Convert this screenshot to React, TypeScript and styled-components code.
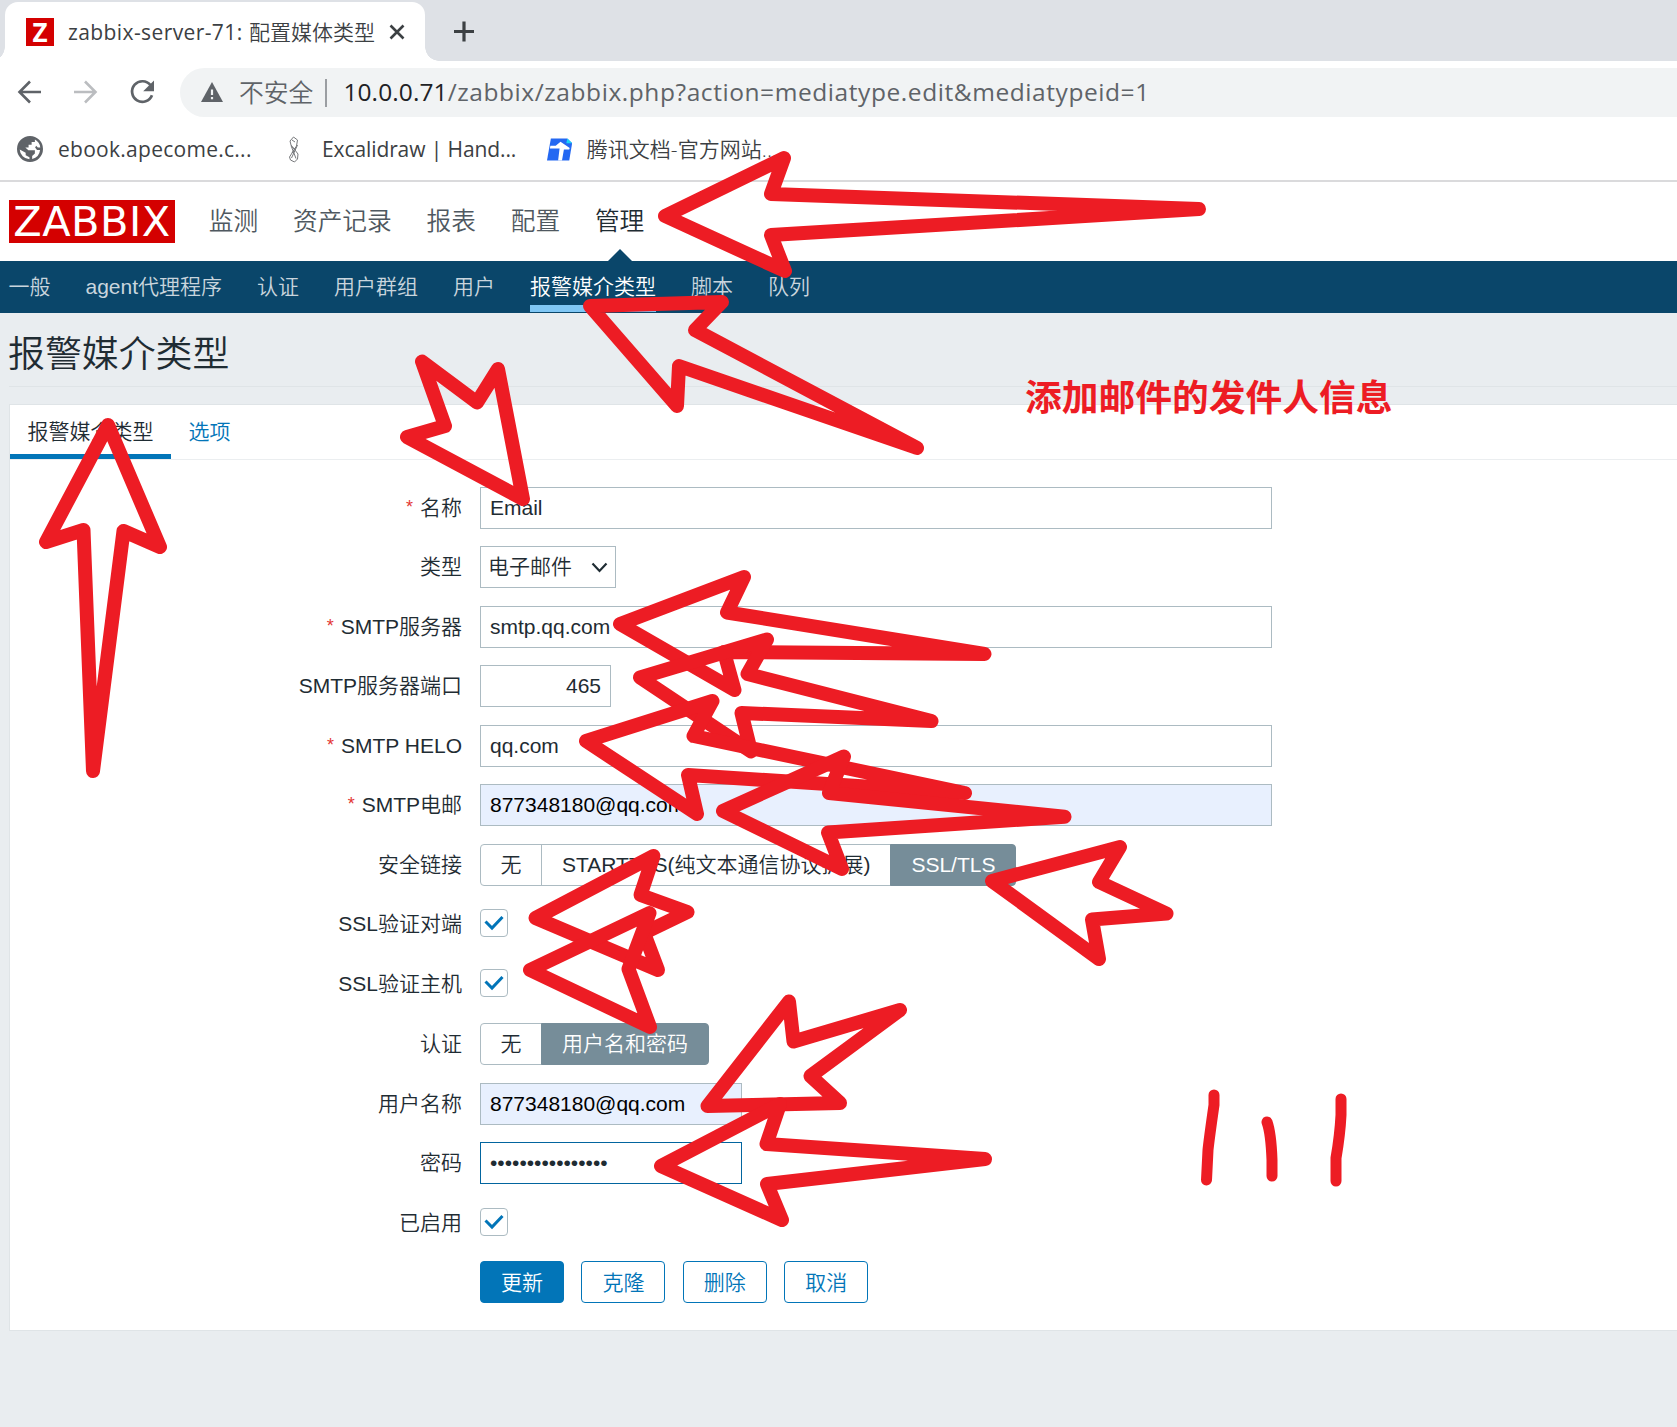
import React from "react";
import styled, { createGlobalStyle, css } from "styled-components";

const UI_FONT = `"Open Sans", "Noto Sans CJK SC", sans-serif`;
const PAGE_FONT = `"Liberation Sans", "Noto Sans CJK SC", sans-serif`;

const GlobalStyle = createGlobalStyle`
  *, *::before, *::after { box-sizing: border-box; }
  body { margin: 0; background: #e9edf0; overflow: hidden; }
  input, button { font: inherit; color: inherit; margin: 0; }
`;

const Screen = styled.div`
  position: relative;
  width: 1677px;
  height: 1427px;
  overflow: hidden;
  background: #e9edf0;
  font-family: ${PAGE_FONT};
  font-weight: 350;
  font-size: 21px;
  line-height: 30px;
  color: #1f2c33;
  white-space: nowrap;
`;

/* ---------- browser chrome ---------- */

const Chrome = styled.header`
  font-family: ${UI_FONT};
  font-weight: 400;
  background: #fff;
  border-bottom: 2px solid #dadadc;
  height: 182px;
`;

const TabStrip = styled.div`
  display: flex;
  align-items: flex-end;
  height: 61px;
  padding-left: 5px;
  background: #dee1e6;
`;

const BrowserTab = styled.div`
  position: relative;
  display: flex;
  align-items: center;
  width: 420px;
  height: 59px;
  padding: 0 20px 0 21px;
  border-radius: 13px 13px 0 0;
  background: #fff;
  color: #3c4043;
  &::before,
  &::after {
    content: "";
    position: absolute;
    bottom: 0;
    width: 14px;
    height: 14px;
  }
  &::before {
    left: -14px;
    background: radial-gradient(circle at 0 0, transparent 13.5px, #fff 14px);
  }
  &::after {
    right: -14px;
    background: radial-gradient(circle at 100% 0, transparent 13.5px, #fff 14px);
  }
`;

const Favicon = styled.span`
  display: grid;
  place-items: center;
  width: 28px;
  height: 28px;
  margin-right: 14px;
  background: #d40000;
  color: #fff;
  font: 700 26px/28px "Open Sans", sans-serif;
`;

const Label = styled.span<{ $size: number; $spacing?: number; $width?: number; $color?: string; $light?: boolean }>`
  font-size: ${(p) => p.$size}px;
  letter-spacing: ${(p) => p.$spacing ?? 0}px;
  color: ${(p) => p.$color ?? "inherit"};
  ${(p) => p.$width && css`width: ${p.$width}px;`}
  ${(p) => p.$light && css`font-weight: 350;`}
`;

const CloseIcon = styled.svg`
  margin-left: auto;
`;

const NewTab = styled.span`
  display: grid;
  place-items: center;
  width: 28px;
  height: 59px;
  margin-left: 25px;
`;

const Toolbar = styled.div`
  display: flex;
  align-items: center;
  height: 63px;
  padding: 0 0 0 17px;
`;

const NavIcon = styled.svg`
  flex: none;
  margin: 0 31px 1px 0;
`;

const AddressBar = styled.div`
  display: flex;
  align-items: center;
  flex: 1;
  height: 49px;
  margin-left: -6px;
  padding: 0 0 2px 21px;
  border-radius: 25px 0 0 25px;
  background: #f1f3f4;
  color: #5f6368;
`;

const SecurityLabel = styled(Label)`
  margin-left: 16px;
`;

const AddressDivider = styled.i`
  width: 2px;
  height: 28px;
  margin: 2px 16px 0 12px;
  background: #9b9ea2;
`;

const Bookmarks = styled.div`
  display: flex;
  align-items: center;
  height: 50px;
  padding-left: 17px;
  color: #3c4043;
`;

const Bookmark = styled.div<{ $width: number; $gap: number }>`
  display: flex;
  align-items: center;
  gap: ${(p) => p.$gap}px;
  width: ${(p) => p.$width}px;
`;

/* ---------- zabbix navigation ---------- */

const TopNav = styled.nav`
  display: flex;
  align-items: center;
  gap: 34.8px;
  height: 79px;
  padding: 0 0 0 9px;
  background: #fff;
  font-size: 24.7px;
  line-height: 36px;
  color: #4f5860;
`;

const Logo = styled.div`
  width: 166px;
  height: 43px;
  margin-right: -1px;
  background: #d40000;
  color: #fff;
  text-align: center;
  letter-spacing: 0.5px;
  font: 400 41.5px/44px "DejaVu Sans", sans-serif;
`;

const TopItem = styled.a<{ $active?: boolean }>`
  position: relative;
  ${(p) =>
    p.$active &&
    css`
      color: #1f2c33;
      &::after {
        content: "";
        position: absolute;
        left: 50%;
        bottom: -22px;
        margin-left: -13px;
        border: 13px solid transparent;
        border-top-width: 0;
        border-bottom-color: #0a466a;
      }
    `}
`;

const SubNav = styled.nav`
  display: flex;
  gap: 35px;
  height: 52px;
  padding-left: 8.5px;
  background: #0a466a;
  color: #c9d5dd;
`;

const SubItem = styled.a<{ $active?: boolean }>`
  height: 51px;
  line-height: 52px;
  border-bottom: 7px solid ${(p) => (p.$active ? "#80c7f5" : "transparent")};
  ${(p) => p.$active && css`color: #fff;`}
`;

const Title = styled.h1`
  height: 74px;
  margin: 0 0 17px 9px;
  border-bottom: 1px solid #dfe4e7;
  font-size: 36.9px;
  font-weight: 350;
  line-height: 84px;
  text-indent: -1px;
`;

/* ---------- form ---------- */

const Card = styled.main`
  height: 927px;
  margin-left: 9px;
  border: 1px solid #dfe4e7;
  border-right: 0;
  background: #fff;
`;

const Tabs = styled.div`
  display: flex;
  height: 55px;
  border-bottom: 1px solid #ebeef0;
`;

const Tab = styled.a<{ $active?: boolean }>`
  height: 54px;
  padding: 0 17.5px;
  line-height: 54px;
  color: ${(p) => (p.$active ? "inherit" : "#0275b8")};
  border-bottom: 5px solid ${(p) => (p.$active ? "#0275b8" : "transparent")};
`;

const Form = styled.form`
  display: grid;
  grid-template-rows: repeat(9, 42px) 43px repeat(4, 42px);
  row-gap: 17.5px;
  padding-top: 26.6px;
`;

const Row = styled.div`
  display: grid;
  grid-template-columns: 452px 1fr;
  grid-template-rows: 42px;
  align-content: end;
  column-gap: 18px;
  align-items: center;
`;

const RowLabel = styled.label<{ $required?: boolean }>`
  text-align: right;
  ${(p) =>
    p.$required &&
    css`
      &::before {
        content: "*";
        margin-right: 7px;
        color: #e33734;
        font-size: 18px;
        vertical-align: 2px;
        line-height: 1;
      }
    `}
`;

const Field = styled.input<{ $width: number; $autofill?: boolean; $focused?: boolean; $right?: boolean }>`
  display: block;
  width: ${(p) => p.$width}px;
  height: 42px;
  padding: 0 9px;
  border: 1px solid ${(p) => (p.$focused ? "#02659f" : "#acbbc2")};
  border-radius: 0;
  outline: 0;
  background: ${(p) => (p.$autofill ? "#e8f0fe" : "#fff")};
  ${(p) => p.$autofill && css`color: #000;`}
  ${(p) => p.$right && css`text-align: right;`}
`;

const Select = styled.div`
  display: flex;
  align-items: center;
  justify-content: space-between;
  width: 136px;
  height: 42px;
  padding: 0 7px;
  border: 1px solid #acbbc2;
`;

const Segments = styled.div`
  display: flex;
  height: 42px;
`;

const Segment = styled.button<{ $active?: boolean }>`
  padding: 0 20px;
  border: 1px solid #acbbc2;
  margin-right: -1px;
  background: #fff;
  &:first-child {
    padding: 0 19.5px;
    border-radius: 4px 0 0 4px;
  }
  &:last-child {
    border-radius: 0 4px 4px 0;
  }
  ${(p) =>
    p.$active &&
    css`
      background: #768d99;
      border-color: #768d99;
      color: #fff;
    `}
`;

const Check = styled.span`
  display: grid;
  place-items: center;
  width: 28px;
  height: 28px;
  margin-top: -2px;
  border: 1px solid #acbbc2;
  border-radius: 4px;
  background: #fff;
`;

const Actions = styled.div`
  display: flex;
  gap: 17.4px;
`;

const Action = styled.button<{ $primary?: boolean }>`
  width: 84px;
  height: 42px;
  padding: 2px 0 0;
  border: 1px solid #0275b8;
  border-radius: 4px;
  background: ${(p) => (p.$primary ? "#0275b8" : "#fff")};
  color: ${(p) => (p.$primary ? "#fff" : "#0275b8")};
`;

/* ---------- hand-drawn marks ---------- */

const Ink = styled.svg`
  position: absolute;
  inset: 0;
  fill: none;
  stroke: #ed1c24;
  stroke-linecap: round;
  stroke-linejoin: round;
  pointer-events: none;
`;

const Note = styled.div`
  position: absolute;
  left: 1025px;
  top: 368px;
  color: #ed1c24;
  font: 700 36.75px/54px "Noto Sans CJK SC", sans-serif;
`;

const arrows = [
  "665,216 784,158 771,194 1199,209 771,235 785,271",
  "590,306 722,302 695,330 917,448 679,366 677,406",
  "422,361.500 477,402.500 498,369 523,499 407,437 445,426",
  "108,425 46,542 83.5,530 93,771 123.5,531 160,547",
  "620,624 744,577 727,612.5 984.5,654 724,652 734.5,690",
  "640,677.5 767,639.5 747.5,674 931.5,721 741.5,713 751,751.5",
  "586,741 712.5,701 693.5,736 965,793 688,775 697,814",
  "723,811 844,756.5 829,793 1064.5,816.7 828,832.5 842,869",
  "992,881 1120,847 1099,882 1166.5,913.5 1092,919.5 1099,959",
  "535.5,918 653.5,856 640.5,895 687.5,912 644,933 658,970",
  "530,970 649.5,913 628.5,969 650,1027",
  "707.5,1106 789,1001.5 793.5,1041.5 900,1010 810.5,1076 840,1103",
  "661,1166 780,1104 766.5,1144 985,1159 767,1184 782,1220",
];

const CheckMark = () => (
  <Check>
    <svg width="20" height="16" viewBox="0 0 20 16">
      <path d="M1.5 6.5 8 13 18.5 2" fill="none" stroke="#0275b8" strokeWidth="3" />
    </svg>
  </Check>
);

type LineProps = { label?: string; required?: boolean; children: React.ReactNode };

const Line = ({ label, required, children }: LineProps) => (
  <Row>
    <RowLabel $required={required}>{label}</RowLabel>
    {children}
  </Row>
);

const subItems = ["一般", "agent代理程序", "认证", "用户群组", "用户", "报警媒介类型", "脚本", "队列"];

export default function App() {
  return (
    <Screen>
      <GlobalStyle />
      <Chrome>
        <TabStrip>
          <BrowserTab>
            <Favicon>Z</Favicon>
            <Label $size={21} $spacing={0.4} $width={181}>zabbix-server-71:</Label>
            <Label $size={21} $light>配置媒体类型</Label>
            <CloseIcon width="16" height="16" viewBox="0 0 16 16">
              <path d="M1.5 1.5 14.5 14.5M14.5 1.5 1.5 14.5" stroke="#3c4043" strokeWidth="2.6" />
            </CloseIcon>
          </BrowserTab>
          <NewTab>
            <svg width="22" height="22" viewBox="0 0 22 22">
              <path d="M11 0.500v20M1 10.500h20" stroke="#3c4043" strokeWidth="3.200" />
            </svg>
          </NewTab>
        </TabStrip>
        <Toolbar>
          <NavIcon width="25" height="24" viewBox="0 0 25 24" fill="none" stroke="#5f6368" strokeWidth="2.6">
            <path d="M24 12H3M13 1.5 2.5 12 13 22.5" />
          </NavIcon>
          <NavIcon width="25" height="24" viewBox="0 0 25 24" fill="none" stroke="#bbbdc0" strokeWidth="2.6">
            <path d="M1 12h21M12 1.5 22.500 12 12 22.500" />
          </NavIcon>
          <NavIcon width="26" height="26" viewBox="0 0 26 26">
            <path d="M21.500 6.200A10.300 10.300 0 1 0 23 16.200" fill="none" stroke="#5f6368" strokeWidth="2.7" />
            <path d="M25 1.500v10.800H14.200z" fill="#5f6368" />
          </NavIcon>
          <AddressBar>
            <svg width="22" height="20" viewBox="0 0 22 20">
              <path d="M11 0 22 20H0z" fill="#5f6368" />
              <path d="M11 7.500v5.500M11 15v2.300" stroke="#f1f3f4" strokeWidth="2.200" />
            </svg>
            <SecurityLabel $size={24.8} $light>不安全</SecurityLabel>
            <AddressDivider />
            <Label $size={24.5} $spacing={0.1} $color="#202124">10.0.0.71</Label>
            <Label $size={24.5} $spacing={0.57}>/zabbix/zabbix.php?action=mediatype.edit&amp;mediatypeid=1</Label>
          </AddressBar>
        </Toolbar>
        <Bookmarks>
          <Bookmark $width={271} $gap={15}>
            <svg width="26" height="26" viewBox="0 0 24 24">
              <path
                fill="#5f6368"
                d="M12 0a12 12 0 1 0 0 24 12 12 0 0 0 0-24zM2.500 12.500 8 15.500v2.200l3.500 1.800v2A9.500 9.500 0 0 1 2.500 12.500zM14 21.200v-2.700l2.500-2.300v-3h-6l-2.800-2.500h3V8h2.800V5.500h3V3.300a9.500 9.500 0 0 1 5 7.200h-2.300l-1.500-1.500-1 1.700 1.800 2.300h2.800A9.500 9.500 0 0 1 14 21.200z"
              />
            </svg>
            <Label $size={21} $spacing={0.27}>ebook.apecome.c...</Label>
          </Bookmark>
          <Bookmark $width={259} $gap={22}>
            <svg width="12" height="27" viewBox="0 0 12 27" fill="none" stroke="#77797c" strokeWidth="1">
              <path d="M2 5 5.500 1l4 3-1 6-7 11 1 3 4 2 3-3 .5-5L3 9zM4 4l3 2M9.500 9l-6 13M3 9.500l5 13M4 11l4 3M8 11l-4 6" />
            </svg>
            <Label $size={21} $spacing={-0.1}>Excalidraw | Hand...</Label>
          </Bookmark>
          <Bookmark $width={230} $gap={14.5}>
            <svg width="26" height="23" viewBox="0 0 26 23">
              <path d="M4 0h17l5 5-3 18H0z" fill="#2468f2" />
              <path d="M21 0 26 5h-6z" fill="#19d5f5" />
              <path d="M3.500 7.500H9l5-4 9.500 6.500-.5 1.500h-5.500L15.500 23h-4l1.500-12.500H3z" fill="#fff" />
            </svg>
            <Label $size={21} $spacing={0.05} $light>腾讯文档-官方网站...</Label>
          </Bookmark>
        </Bookmarks>
      </Chrome>

      <TopNav>
        <Logo>ZABBIX</Logo>
        <TopItem>监测</TopItem>
        <TopItem>资产记录</TopItem>
        <TopItem>报表</TopItem>
        <TopItem>配置</TopItem>
        <TopItem $active>管理</TopItem>
      </TopNav>
      <SubNav>
        {subItems.map((item) => (
          <SubItem key={item} $active={item === "报警媒介类型"}>{item}</SubItem>
        ))}
      </SubNav>

      <Title>报警媒介类型</Title>

      <Card>
        <Tabs>
          <Tab $active>报警媒介类型</Tab>
          <Tab>选项</Tab>
        </Tabs>
        <Form onSubmit={(e) => e.preventDefault()}>
          <Line label="名称" required><Field $width={792} defaultValue="Email" /></Line>
          <Line label="类型">
            <Select>
              电子邮件
              <svg width="17" height="11" viewBox="0 0 17 11">
                <path d="M1.500 1.500 8.500 9l7-7.500" fill="none" stroke="#1f2c33" strokeWidth="2.200" />
              </svg>
            </Select>
          </Line>
          <Line label="SMTP服务器" required><Field $width={792} defaultValue="smtp.qq.com" /></Line>
          <Line label="SMTP服务器端口"><Field $width={131} $right defaultValue="465" /></Line>
          <Line label="SMTP HELO" required><Field $width={792} defaultValue="qq.com" /></Line>
          <Line label="SMTP电邮" required><Field $width={792} $autofill defaultValue="877348180@qq.com" /></Line>
          <Line label="安全链接">
            <Segments>
              <Segment>无</Segment>
              <Segment>STARTTLS(纯文本通信协议扩展)</Segment>
              <Segment $active>SSL/TLS</Segment>
            </Segments>
          </Line>
          <Line label="SSL验证对端"><CheckMark /></Line>
          <Line label="SSL验证主机"><CheckMark /></Line>
          <Line label="认证">
            <Segments>
              <Segment>无</Segment>
              <Segment $active>用户名和密码</Segment>
            </Segments>
          </Line>
          <Line label="用户名称"><Field $width={262} $autofill defaultValue="877348180@qq.com" /></Line>
          <Line label="密码"><Field $width={262} $focused type="password" defaultValue="abcdefghijklmnop" /></Line>
          <Line label="已启用"><CheckMark /></Line>
          <Line>
            <Actions>
              <Action $primary>更新</Action>
              <Action>克隆</Action>
              <Action>删除</Action>
              <Action>取消</Action>
            </Actions>
          </Line>
        </Form>
      </Card>

      <Ink width="1677" height="1427" viewBox="0 0 1677 1427">
        <g strokeWidth="14">
          {arrows.map((points) => (
            <polygon key={points} points={points} />
          ))}
        </g>
        <g strokeWidth="11">
          <path d="M1214 1095v10Q1209 1140 1208 1150L1206.500 1180" />
          <path d="M1267 1122Q1271 1133 1272 1160V1176" />
          <path d="M1341 1099v16Q1340 1135 1336 1158v23" />
        </g>
      </Ink>
      <Note>添加邮件的发件人信息</Note>
    </Screen>
  );
}
